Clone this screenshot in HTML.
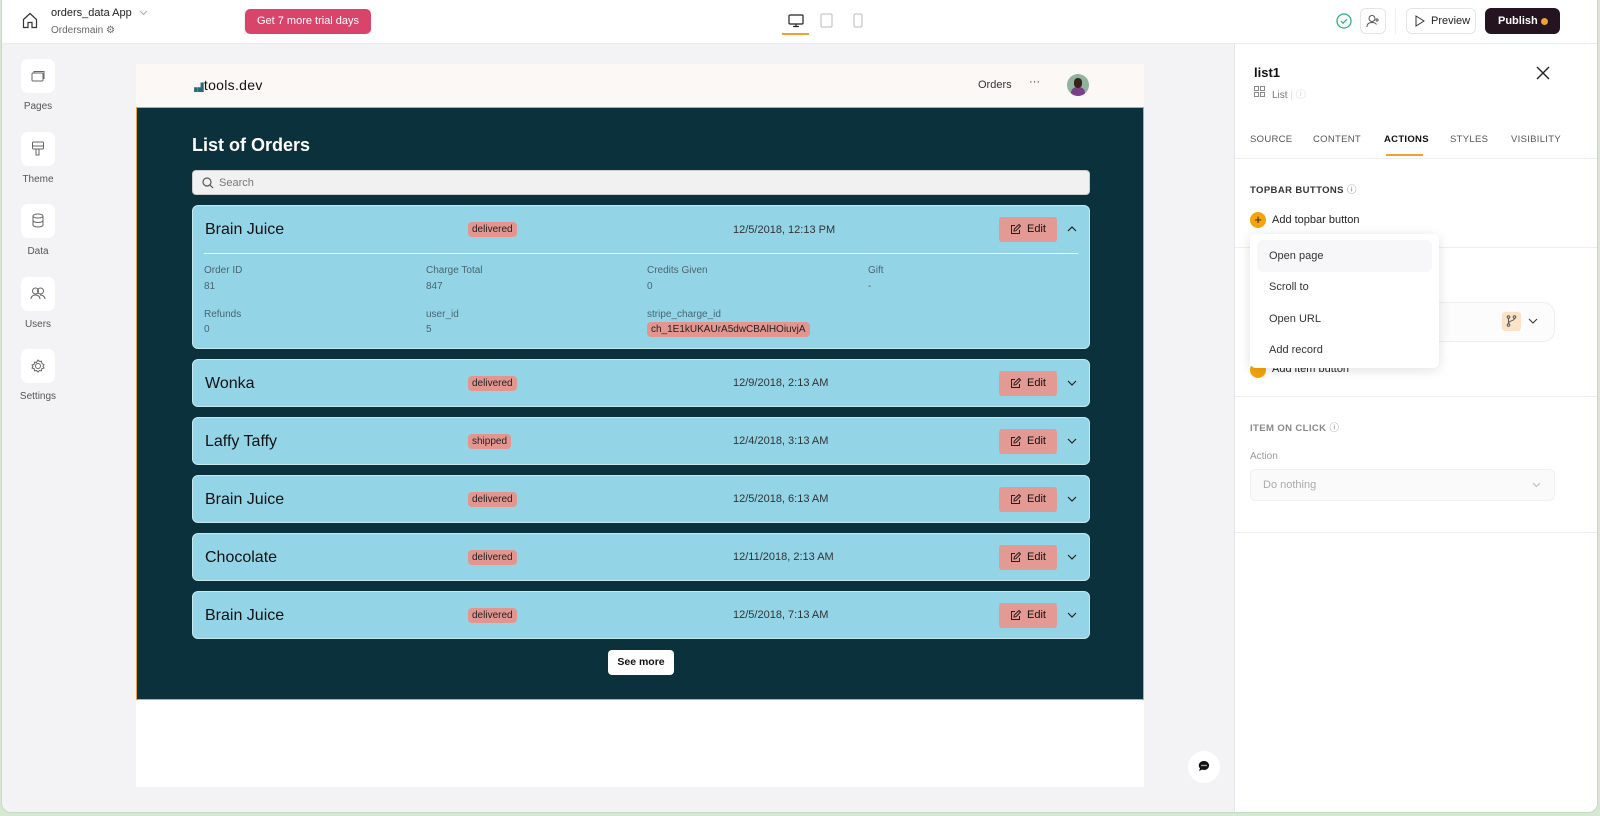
<!DOCTYPE html>
<html><head><meta charset="utf-8"><style>
*{box-sizing:border-box;margin:0;padding:0}
body{width:1600px;height:816px;overflow:hidden;background:#d6e8d3;font-family:"Liberation Sans",sans-serif;color:#1b1b1f;position:relative}
.a{position:absolute}
#frame{left:1px;top:0;width:1597px;height:813px;background:#f3f3f5;border-radius:0 0 10px 10px;overflow:hidden;border:1px solid #c5dcc1;border-top:none}
.top{left:0;top:0;width:1600px;height:44px;background:#fff;border-bottom:1px solid #ececef}
.side .ic{position:absolute;left:19px;width:34px;height:34px;background:#fff;border-radius:7px}
.side .lb{position:absolute;width:72px;left:0;text-align:center;font-size:10px;color:#555}
.card{position:absolute;left:190px;width:898px;background:#93d5e6;border:1px solid #c8e8f0;border-radius:6px}
.card .t{position:absolute;left:12px;font-size:16px;color:#111}
.badge{position:absolute;left:275px;background:#e3968f;border-radius:4px;font-size:10px;padding:2px 4px;color:#222}
.date{position:absolute;left:540px;font-size:11px;color:#333}
.edit{position:absolute;left:806px;width:58px;height:25px;background:#e39a94;border-radius:3px;font-size:11px;color:#111;line-height:25px;padding-left:28px}
.edit svg{position:absolute;left:11px;top:7px}
.chev{position:absolute;left:874px}
.f{position:absolute;font-size:10px;color:#4a6570}
.v{position:absolute;font-size:10px;color:#4a6570}
.tab{position:absolute;top:134px;font-size:9.5px;color:#555;letter-spacing:.3px}
.mi{position:absolute;left:1267px;font-size:11px;color:#333}
</style></head><body>
<div id="frame" class="a">
<div class="a top">
  <svg class="a" style="left:20px;top:12px" width="16" height="17" viewBox="0 0 16 17" fill="none" stroke="#333" stroke-width="1.2"><path d="M1.5 7.5L8 1.5l6.5 6V15.5H10v-5H6v5H1.5z"/></svg>
  <div class="a" style="left:49px;top:7px;font-size:11px;color:#222">orders_data App</div>
  <svg class="a" style="left:137px;top:10px" width="9" height="6" viewBox="0 0 9 6" fill="none" stroke="#aaa"><path d="M1 1l3.5 3.5L8 1"/></svg>
  <div class="a" style="left:49px;top:25px;font-size:10px;color:#666">Ordersmain ⚙</div>
  <div class="a" style="left:242px;top:9px;width:1px;height:25px;background:#eee"></div>
  <div class="a" style="left:243px;top:9px;width:126px;height:25px;background:#d9456a;border-radius:5px;color:#fff;font-size:11px;line-height:25px;text-align:center">Get 7 more trial days</div>
  <svg class="a" style="left:786px;top:14px" width="16" height="14" viewBox="0 0 16 14" fill="none" stroke="#222" stroke-width="1.2"><rect x="1" y="1" width="14" height="9" rx="1"/><path d="M8 10v2M5 12.5h6"/></svg>
  <div class="a" style="left:780px;top:33px;width:27px;height:2px;background:#f0a030"></div>
  <svg class="a" style="left:818px;top:13px" width="13" height="15" viewBox="0 0 13 15" fill="none" stroke="#bbb"><rect x="1" y="1" width="11" height="13" rx="1"/></svg>
  <svg class="a" style="left:851px;top:13px" width="10" height="15" viewBox="0 0 10 15" fill="none" stroke="#bbb"><rect x="1" y="1" width="8" height="13" rx="1.5"/></svg>
  <svg class="a" style="left:1334px;top:13px" width="16" height="16" viewBox="0 0 16 16" fill="none" stroke="#2bb07a" stroke-width="1.3"><circle cx="8" cy="8" r="7"/><path d="M5 8.2l2 2 4-4"/></svg>
  <div class="a" style="left:1358px;top:8px;width:26px;height:26px;border:1px solid #e5e5e5;border-radius:6px"></div>
  <svg class="a" style="left:1364px;top:14px" width="14" height="14" viewBox="0 0 14 14" fill="none" stroke="#555"><circle cx="6" cy="4.5" r="3"/><path d="M1 13c0-3 2-4.5 5-4.5s4 1 4.5 2M11 4v4M9 6h4"/></svg>
  <div class="a" style="left:1393px;top:9px;width:1px;height:25px;background:#eee"></div>
  <div class="a" style="left:1404px;top:8px;width:70px;height:26px;border:1px solid #e5e5e5;border-radius:6px;font-size:11px;line-height:24px;padding-left:24px;color:#222">Preview</div>
  <svg class="a" style="left:1413px;top:15px" width="10" height="12" viewBox="0 0 10 12" fill="none" stroke="#333"><path d="M1 1l8 5-8 5z"/></svg>
  <div class="a" style="left:1483px;top:8px;width:75px;height:26px;background:#24141f;border-radius:6px;color:#fff;font-size:11px;font-weight:bold;line-height:26px;padding-left:13px">Publish</div>
  <div class="a" style="left:1539px;top:18px;width:7px;height:7px;border-radius:50%;background:#f0a030"></div>
</div>

<div class="side">
  <div class="ic" style="top:59px"></div><svg class="a" style="left:29px;top:70px" width="14" height="12" viewBox="0 0 14 12" fill="none" stroke="#666"><rect x="1" y="3" width="11" height="8" rx="1"/><path d="M3 3V1.5h10v7h-1"/></svg><div class="lb" style="top:101px">Pages</div>
  <div class="ic" style="top:132px"></div><svg class="a" style="left:29px;top:141px" width="14" height="16" viewBox="0 0 14 16" fill="none" stroke="#666"><rect x="1.5" y="1" width="11" height="7" rx="1"/><path d="M1.5 5h11M5 8v6h3V8"/></svg><div class="lb" style="top:174px">Theme</div>
  <div class="ic" style="top:204px"></div><svg class="a" style="left:30px;top:213px" width="12" height="15" viewBox="0 0 12 15" fill="none" stroke="#666"><ellipse cx="6" cy="3" rx="5" ry="2"/><path d="M1 3v9c0 1 2 2 5 2s5-1 5-2V3M1 7.5c0 1 2 2 5 2s5-1 5-2"/></svg><div class="lb" style="top:246px">Data</div>
  <div class="ic" style="top:277px"></div><svg class="a" style="left:28px;top:287px" width="16" height="13" viewBox="0 0 16 13" fill="none" stroke="#666"><circle cx="5.5" cy="4" r="3"/><circle cx="10.5" cy="4" r="3"/><path d="M1 12c0-2.5 2-4 4.5-4s4.5 1.5 4.5 4M10 8c2.5 0 5 1.5 5 4"/></svg><div class="lb" style="top:319px">Users</div>
  <div class="ic" style="top:349px"></div><svg class="a" style="left:29px;top:359px" width="14" height="14" viewBox="0 0 14 14" fill="none" stroke="#666"><circle cx="7" cy="7" r="2.5"/><path d="M7 1l1.5 1.5 2-.3.3 2L13 6l-1 1.5 1 1.5-2.2.8-.3 2-2-.3L7 13l-1.5-1.5-2 .3-.3-2L1 9l1-1.5L1 6l2.2-.8.3-2 2 .3z"/></svg><div class="lb" style="top:391px">Settings</div>
</div>

<div class="a" style="left:134px;top:64px;width:1008px;height:723px;background:#fff"></div>
<div class="a" style="left:134px;top:64px;width:1008px;height:44px;background:#fcf8f6"></div>
<div class="a" style="left:189px;top:77px;font-size:14px;color:#111;letter-spacing:.3px"><span style="font-size:8px;color:#2a6a7a">▗▟</span>tools.dev</div>
<div class="a" style="left:976px;top:79px;font-size:11px;color:#333">Orders</div>
<div class="a" style="left:1027px;top:76px;font-size:11px;color:#333">···</div>
<div class="a" style="left:1065px;top:74px;width:22px;height:22px;border-radius:50%;background:#8fb39c;overflow:hidden"><div class="a" style="left:4px;top:13px;width:14px;height:10px;border-radius:6px 6px 0 0;background:#7a3f8a"></div><div class="a" style="left:7px;top:4px;width:8px;height:10px;border-radius:4px;background:#3a2218"></div></div>

<div class="a" style="left:134px;top:107px;width:1008px;height:593px;background:#0b313c;border:1px solid #e8a33a"></div>
<div class="a" style="left:190px;top:135px;font-size:18px;font-weight:bold;color:#fff">List of Orders</div>
<div class="a" style="left:190px;top:170px;width:898px;height:25px;background:#f1f1f1;border-radius:4px;border:1px solid #ccc"></div>
<svg class="a" style="left:200px;top:177px" width="12" height="12" viewBox="0 0 12 12" fill="none" stroke="#555" stroke-width="1.2"><circle cx="5" cy="5" r="4"/><path d="M8 8l3 3"/></svg>
<div class="a" style="left:217px;top:177px;font-size:11px;color:#777">Search</div>

<div class="card" style="top:205px;height:144px">
  <div class="t" style="top:15px">Brain Juice</div>
  <div class="badge" style="top:16px">delivered</div>
  <div class="date" style="top:18px">12/5/2018, 12:13 PM</div>
  <div class="edit" style="top:11px"><svg width="11" height="11" viewBox="0 0 11 11" fill="none" stroke="#222"><path d="M5 1.5H1.5v8h8V6M4 7l.3-2L9 .5l1.5 1.5L6 6.7z"/></svg>Edit</div>
  <svg class="chev" style="top:20px" width="10" height="6" viewBox="0 0 10 6" fill="none" stroke="#222" stroke-width="1.2"><path d="M1 5l4-4 4 4"/></svg>
  <div class="a" style="left:11px;top:47px;width:874px;height:1px;background:#fff"></div>
  <div class="f" style="left:11px;top:59px">Order ID</div><div class="v" style="left:11px;top:75px">81</div>
  <div class="f" style="left:233px;top:59px">Charge Total</div><div class="v" style="left:233px;top:75px">847</div>
  <div class="f" style="left:454px;top:59px">Credits Given</div><div class="v" style="left:454px;top:75px">0</div>
  <div class="f" style="left:675px;top:59px">Gift</div><div class="v" style="left:675px;top:75px">-</div>
  <div class="f" style="left:11px;top:103px">Refunds</div><div class="v" style="left:11px;top:118px">0</div>
  <div class="f" style="left:233px;top:103px">user_id</div><div class="v" style="left:233px;top:118px">5</div>
  <div class="f" style="left:454px;top:103px">stripe_charge_id</div>
  <div class="a" style="left:454px;top:116px;background:#e3968f;border-radius:4px;font-size:10px;padding:2px 4px;color:#222">ch_1E1kUKAUrA5dwCBAlHOiuvjA</div>
</div>

<div class="card" style="top:359px;height:48px"><div class="t" style="top:15px">Wonka</div><div class="badge" style="top:16px">delivered</div><div class="date" style="top:17px">12/9/2018, 2:13 AM</div><div class="edit" style="top:11px"><svg width="11" height="11" viewBox="0 0 11 11" fill="none" stroke="#222"><path d="M5 1.5H1.5v8h8V6M4 7l.3-2L9 .5l1.5 1.5L6 6.7z"/></svg>Edit</div><svg class="chev" style="top:20px" width="10" height="6" viewBox="0 0 10 6" fill="none" stroke="#222" stroke-width="1.2"><path d="M1 1l4 4 4-4"/></svg></div>
<div class="card" style="top:417px;height:48px"><div class="t" style="top:15px">Laffy Taffy</div><div class="badge" style="top:16px">shipped</div><div class="date" style="top:17px">12/4/2018, 3:13 AM</div><div class="edit" style="top:11px"><svg width="11" height="11" viewBox="0 0 11 11" fill="none" stroke="#222"><path d="M5 1.5H1.5v8h8V6M4 7l.3-2L9 .5l1.5 1.5L6 6.7z"/></svg>Edit</div><svg class="chev" style="top:20px" width="10" height="6" viewBox="0 0 10 6" fill="none" stroke="#222" stroke-width="1.2"><path d="M1 1l4 4 4-4"/></svg></div>
<div class="card" style="top:475px;height:48px"><div class="t" style="top:15px">Brain Juice</div><div class="badge" style="top:16px">delivered</div><div class="date" style="top:17px">12/5/2018, 6:13 AM</div><div class="edit" style="top:11px"><svg width="11" height="11" viewBox="0 0 11 11" fill="none" stroke="#222"><path d="M5 1.5H1.5v8h8V6M4 7l.3-2L9 .5l1.5 1.5L6 6.7z"/></svg>Edit</div><svg class="chev" style="top:20px" width="10" height="6" viewBox="0 0 10 6" fill="none" stroke="#222" stroke-width="1.2"><path d="M1 1l4 4 4-4"/></svg></div>
<div class="card" style="top:533px;height:48px"><div class="t" style="top:15px">Chocolate</div><div class="badge" style="top:16px">delivered</div><div class="date" style="top:17px">12/11/2018, 2:13 AM</div><div class="edit" style="top:11px"><svg width="11" height="11" viewBox="0 0 11 11" fill="none" stroke="#222"><path d="M5 1.5H1.5v8h8V6M4 7l.3-2L9 .5l1.5 1.5L6 6.7z"/></svg>Edit</div><svg class="chev" style="top:20px" width="10" height="6" viewBox="0 0 10 6" fill="none" stroke="#222" stroke-width="1.2"><path d="M1 1l4 4 4-4"/></svg></div>
<div class="card" style="top:591px;height:48px"><div class="t" style="top:15px">Brain Juice</div><div class="badge" style="top:16px">delivered</div><div class="date" style="top:17px">12/5/2018, 7:13 AM</div><div class="edit" style="top:11px"><svg width="11" height="11" viewBox="0 0 11 11" fill="none" stroke="#222"><path d="M5 1.5H1.5v8h8V6M4 7l.3-2L9 .5l1.5 1.5L6 6.7z"/></svg>Edit</div><svg class="chev" style="top:20px" width="10" height="6" viewBox="0 0 10 6" fill="none" stroke="#222" stroke-width="1.2"><path d="M1 1l4 4 4-4"/></svg></div>

<div class="a" style="left:606px;top:650px;width:66px;height:25px;background:#fff;border-radius:4px;font-size:10.5px;font-weight:bold;text-align:center;line-height:25px;color:#111">See more</div>

<div class="a" style="left:1186px;top:751px;width:32px;height:32px;border-radius:50%;background:#fff"></div>
<svg class="a" style="left:1196px;top:760px" width="12" height="12" viewBox="0 0 12 12"><path d="M6 1a5 4.5 0 1 1-2 8.6L1 11l1-2.6A5 4.5 0 0 1 6 1z" fill="#111"/><circle cx="4" cy="5.5" r=".7" fill="#fff"/><circle cx="6" cy="5.5" r=".7" fill="#fff"/><circle cx="8" cy="5.5" r=".7" fill="#fff"/></svg>

<div class="a" style="left:1232px;top:44px;width:366px;height:770px;background:#fff;border-left:1px solid #e6e6ea"></div>
<div class="a" style="left:1252px;top:65px;font-size:13px;font-weight:bold;color:#111">list1</div>
<svg class="a" style="left:1252px;top:86px" width="11" height="11" viewBox="0 0 11 11" fill="none" stroke="#888"><rect x=".5" y=".5" width="4" height="4"/><rect x="6.5" y=".5" width="4" height="4"/><rect x=".5" y="6.5" width="4" height="4"/><rect x="6.5" y="6.5" width="4" height="4"/></svg>
<div class="a" style="left:1270px;top:86px;font-size:10px;color:#777">List <span style="color:#ddd">|</span> <span style="color:#ccc">ⓘ</span></div>
<svg class="a" style="left:1534px;top:66px" width="14" height="14" viewBox="0 0 14 14" stroke="#222" stroke-width="1.4"><path d="M1 1l12 12M13 1L1 13"/></svg>
<div class="tab" style="left:1248px">SOURCE</div>
<div class="tab" style="left:1311px">CONTENT</div>
<div class="tab" style="left:1382px;color:#111;font-weight:bold">ACTIONS</div>
<div class="tab" style="left:1448px">STYLES</div>
<div class="tab" style="left:1509px">VISIBILITY</div>
<div class="a" style="left:1384px;top:154px;width:37px;height:2px;background:#f0a030"></div>
<div class="a" style="left:1233px;top:158px;width:365px;height:1px;background:#eee"></div>
<div class="a" style="left:1248px;top:182px;font-size:9.5px;font-weight:bold;color:#333;letter-spacing:.4px">TOPBAR BUTTONS <span style="font-weight:normal;color:#777">ⓘ</span></div>
<div class="a" style="left:1248px;top:212px;width:16px;height:16px;border-radius:50%;background:#f5a30a;color:#222;font-size:13px;line-height:15px;text-align:center">+</div>
<div class="a" style="left:1270px;top:214px;font-size:11px;color:#222">Add topbar button</div>
<div class="a" style="left:1233px;top:247px;width:365px;height:1px;background:#eee"></div>
<div class="a" style="left:1248px;top:302px;width:305px;height:40px;border:1px solid #eee;border-radius:12px;background:#fcfcfc"></div>
<div class="a" style="left:1500px;top:312px;width:19px;height:19px;background:#fbe3c8;border-radius:3px"></div>
<svg class="a" style="left:1504px;top:315px" width="11" height="12" viewBox="0 0 11 12" fill="none" stroke="#555"><circle cx="2.5" cy="2" r="1.3"/><circle cx="8.5" cy="2" r="1.3"/><circle cx="2.5" cy="10" r="1.3"/><path d="M2.5 3.3v5.4M8.5 3.3c0 3-6 2-6 5"/></svg>
<svg class="a" style="left:1526px;top:318px" width="10" height="6" viewBox="0 0 10 6" fill="none" stroke="#333"><path d="M1 1l4 4 4-4"/></svg>
<div class="a" style="left:1248px;top:362px;width:16px;height:16px;border-radius:50%;background:#f5a30a"></div>
<div class="a" style="left:1270px;top:363px;font-size:11px;color:#222">Add item button</div>
<div class="a" style="left:1233px;top:396px;width:365px;height:1px;background:#eee"></div>
<div class="a" style="left:1248px;top:420px;font-size:9.5px;font-weight:bold;color:#888;letter-spacing:.4px">ITEM ON CLICK <span style="font-weight:normal">ⓘ</span></div>
<div class="a" style="left:1248px;top:451px;font-size:10px;color:#999">Action</div>
<div class="a" style="left:1248px;top:469px;width:305px;height:32px;border:1px solid #f0f0f0;border-radius:6px;background:#fafafa;font-size:11px;color:#aaa;line-height:30px;padding-left:12px">Do nothing</div>
<svg class="a" style="left:1530px;top:482px" width="9" height="6" viewBox="0 0 9 6" fill="none" stroke="#bbb"><path d="M1 1l3.5 3.5L8 1"/></svg>
<div class="a" style="left:1233px;top:532px;width:365px;height:1px;background:#eee"></div>

<div class="a" style="left:1248px;top:234px;width:189px;height:134px;background:#fff;border-radius:6px;box-shadow:0 2px 12px rgba(0,0,0,.12)"></div>
<div class="a" style="left:1255px;top:240px;width:175px;height:32px;background:#f7f7f9;border-radius:6px"></div>
<div class="mi" style="top:250px">Open page</div>
<div class="mi" style="top:281px">Scroll to</div>
<div class="mi" style="top:313px">Open URL</div>
<div class="mi" style="top:344px">Add record</div>
</div>
</body></html>
